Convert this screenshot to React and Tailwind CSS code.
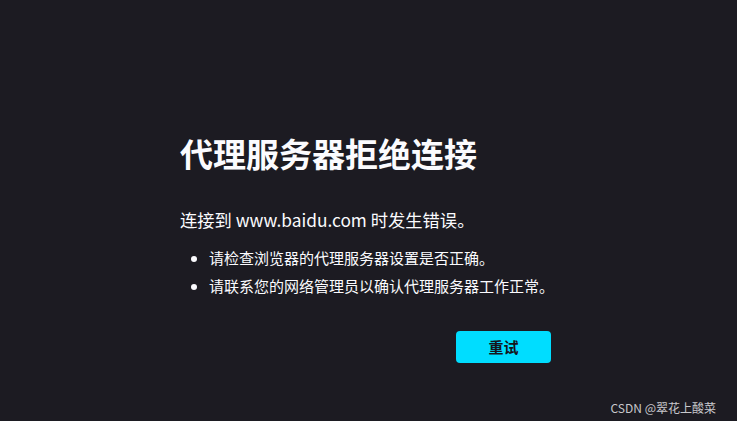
export default function App() {
  const font = { fontFamily: '"Noto Sans CJK SC", "Noto Sans", sans-serif' };
  return (
    <div
      className="relative w-[737px] h-[421px] bg-[#1c1b22] text-[#fbfbfe] overflow-hidden"
      style={font}
    >
      <div className="ml-[180px] w-[371px] pt-[137px] flex flex-col">
        <h1 className="text-[33px] leading-[33px] font-bold whitespace-nowrap">代理服务器拒绝连接</h1>
        <p className="mt-[38px] text-[17.3px] leading-[24px] whitespace-nowrap">
          连接到 www.baidu.com 时发生错误。
        </p>
        <ul className="mt-[12px] list-disc pl-[29px] text-[15px] leading-[28px] whitespace-nowrap">
          <li>请检查浏览器的代理服务器设置是否正确。</li>
          <li>请联系您的网络管理员以确认代理服务器工作正常。</li>
        </ul>
        <div className="mt-[31px] flex justify-end">
          <button className="w-[95px] h-[32px] rounded-[4px] bg-[#00ddff] text-[#15141a] text-[15px] font-bold flex items-center justify-center">
            重试
          </button>
        </div>
      </div>
      <div className="absolute right-[21px] bottom-[5px] text-[12px] leading-[16px] text-[#c8c8cc] whitespace-nowrap">
        CSDN @翠花上酸菜
      </div>
    </div>
  );
}
